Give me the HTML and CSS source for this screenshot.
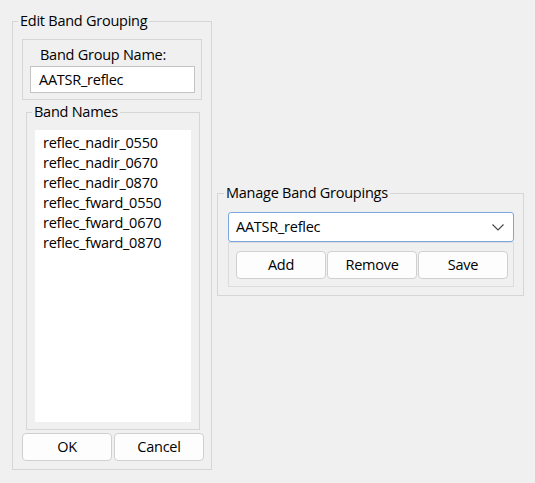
FILE: index.html
```html
<!DOCTYPE html>
<html>
<head>
<meta charset="utf-8">
<link rel="stylesheet" href="styles.css">
</head>
<body>
<div class="app">
  <fieldset class="group edit">
    <legend>Edit Band Grouping</legend>
    <div class="name-box">
      <div class="label">Band Group Name:</div>
      <div class="input">AATSR_reflec</div>
    </div>
    <fieldset class="group names">
      <legend>Band Names</legend>
      <ul class="list">
        <li>reflec_nadir_0550</li>
        <li>reflec_nadir_0670</li>
        <li>reflec_nadir_0870</li>
        <li>reflec_fward_0550</li>
        <li>reflec_fward_0670</li>
        <li>reflec_fward_0870</li>
      </ul>
    </fieldset>
    <div class="btns">
      <button class="btn">OK</button>
      <button class="btn">Cancel</button>
    </div>
  </fieldset>
  <fieldset class="group manage">
    <legend>Manage Band Groupings</legend>
    <div class="combo">
      <span>AATSR_reflec</span>
      <svg class="chev" width="12" height="7" viewBox="0 0 12 7"><polyline points="0.5,0.5 6,6 11.5,0.5" fill="none" stroke="#444" stroke-width="1.1"/></svg>
    </div>
    <div class="actions">
      <button class="btn">Add</button>
      <button class="btn">Remove</button>
      <button class="btn">Save</button>
    </div>
  </fieldset>
</div>
</body>
</html>
```

FILE: styles.css
```css
* { box-sizing: border-box; }
html, body {
  margin: 0;
  padding: 0;
  background: #f0f0f0;
}
body {
  width: 535px;
  height: 483px;
  overflow: hidden;
  font-family: "Open Sans", "Noto Sans", sans-serif;
  font-size: 14.5px;
  letter-spacing: -0.25px;
  line-height: 20px;
  color: #000;
}
.app {
  display: flex;
  align-items: flex-start;
  padding-left: 12px;
  gap: 5px;
}
.group {
  margin: 0;
  padding: 0;
  min-width: 0;
  border: 1px solid #d6d6d6;
}
.group > legend {
  padding: 0 2px;
  margin-left: 5px;
  line-height: 20px;
  height: 20px;
}
.edit {
  width: 200px;
  margin-top: 11px;
  padding: 8px 0 8px 0;
}
.name-box {
  margin-left: 9px;
  width: 180px;
  height: 61px;
  border: 1px solid #d6d6d6;
  padding: 5px 0 0 7px;
}
.label {
  padding-left: 10px;
  line-height: 20px;
}
.input {
  margin-top: 1px;
  width: 165px;
  height: 27px;
  background: #fff;
  border: 1px solid #c4c4c4;
  padding-left: 8px;
  line-height: 25px;
}
.names {
  width: 174px;
  margin: 2px 0 0 13px;
  padding: 8px 8px 7px 8px;
}
.names > legend {
  margin-left: -3px;
}
.list {
  list-style: none;
  margin: 0;
  height: 292px;
  background: #fff;
  padding: 3px 0 0 8px;
}
.list li {
  line-height: 20px;
}
.btns {
  display: flex;
  gap: 2px;
  margin: 3px 0 0 9px;
}
.btn {
  width: 90px;
  height: 28px;
  padding: 0;
  font-family: inherit;
  font-size: 14.5px;
  letter-spacing: -0.25px;
  color: #000;
  background: #fdfdfd;
  border: 1px solid #d0d0d0;
  border-radius: 4px;
  line-height: 26px;
  text-align: center;
}
.manage {
  width: 307px;
  margin-top: 183px;
  padding: 9px 0 8px 10px;
}
.manage > legend {
  margin-left: -4px;
}
.combo {
  width: 286px;
  height: 30px;
  background: #fff;
  border: 1px solid #7aa7e0;
  border-radius: 3px;
  display: flex;
  align-items: center;
  justify-content: space-between;
  padding: 0 9px 0 7px;
}
.chev { display: block; }
.actions {
  width: 286px;
  height: 45px;
  border: 1px solid #dcdcdc;
  display: flex;
  gap: 1px;
  padding: 8px 0 0 7px;
}
```
